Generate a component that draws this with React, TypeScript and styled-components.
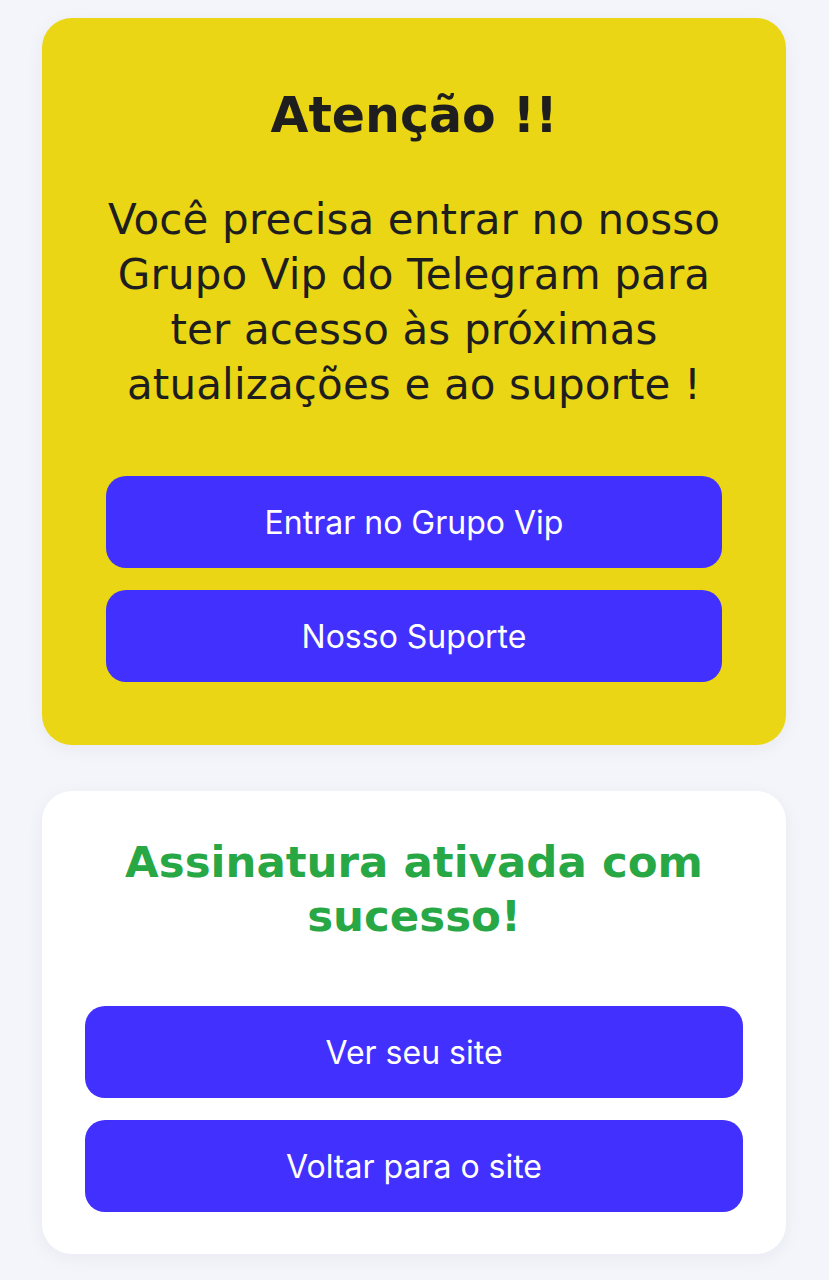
import React from "react";
import styled, { createGlobalStyle } from "styled-components";

const GlobalStyle = createGlobalStyle`
  html, body {
    margin: 0;
    padding: 0;
    background: #f4f5fa;
  }
  * { box-sizing: border-box; }
`;

const Page = styled.main`
  display: flex;
  flex-direction: column;
  gap: 46px;
  padding: 18px 43px 26px 42px;
  font-family: "DejaVu Sans", Verdana, sans-serif;
`;

const Card = styled.section<{ $tone: "warning" | "plain" }>`
  display: flex;
  flex-direction: column;
  align-items: stretch;
  border-radius: 30px;
  background: ${(p) => (p.$tone === "warning" ? "#ead614" : "#ffffff")};
  padding: ${(p) => (p.$tone === "warning" ? "70px 64px 63px" : "44px 43px 42px")};
  box-shadow: 0 4px 18px rgba(30, 40, 90, 0.05);
`;

const Title = styled.h1<{ $color: string; $size: number; $lh: number }>`
  margin: 0;
  text-align: center;
  font-weight: 700;
  color: ${(p) => p.$color};
  font-size: ${(p) => p.$size}px;
  line-height: ${(p) => p.$lh}px;
`;

const Message = styled.p`
  margin: 48px 0 0;
  text-align: center;
  color: #1e1e1e;
  font-size: 42px;
  letter-spacing: 0.15px;
  line-height: 55px;
`;

const Actions = styled.div<{ $top: number }>`
  display: flex;
  flex-direction: column;
  gap: 22px;
  margin-top: ${(p) => p.$top}px;
`;

const ActionButton = styled.button`
  height: 92px;
  border: none;
  border-radius: 20px;
  background: #4230fe;
  color: #ffffff;
  font-family: Inter, "Noto Sans", sans-serif;
  font-size: 32px;
  font-weight: 400;
  cursor: pointer;
`;

export default function App() {
  return (
    <>
      <GlobalStyle />
      <Page>
        <Card $tone="warning">
          <Title $color="#1e1e1e" $size={49} $lh={56}>
            Atenção !!
          </Title>
          <Message>
            Você precisa entrar no nosso Grupo Vip do Telegram para ter acesso às próximas
            atualizações e ao suporte !
          </Message>
          <Actions $top={64}>
            <ActionButton>Entrar no Grupo Vip</ActionButton>
            <ActionButton>Nosso Suporte</ActionButton>
          </Actions>
        </Card>
        <Card $tone="plain">
          <Title $color="#28a745" $size={43.5} $lh={54}>
            Assinatura ativada com sucesso!
          </Title>
          <Actions $top={63}>
            <ActionButton>Ver seu site</ActionButton>
            <ActionButton>Voltar para o site</ActionButton>
          </Actions>
        </Card>
      </Page>
    </>
  );
}
